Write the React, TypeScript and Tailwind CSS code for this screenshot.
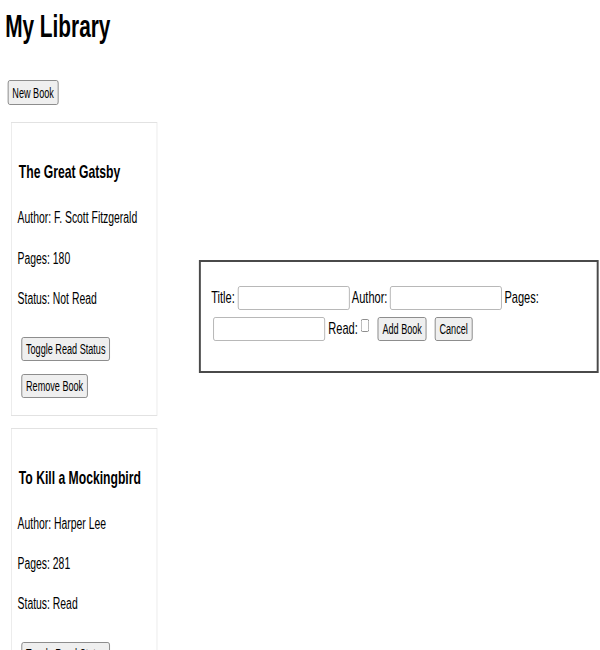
import React from "react";

const btn =
  "bg-[#efefef] border border-[#767676] rounded-[3px] px-[6px] text-[14px] leading-[16px] text-black";

function Card({
  title,
  author,
  pages,
  status,
}: {
  title: string;
  author: string;
  pages: number;
  status: string;
}) {
  return (
    <div className="border border-[#e2e2e2] w-[225px] pt-[38px] pb-[17px] px-[9px] flex flex-col items-start shrink-0">
      <h3 className="text-[18.72px] leading-[22px] font-bold ml-[2px]">{title}</h3>
      <p className="mt-[26px] leading-[18px]">Author: {author}</p>
      <p className="mt-[22.5px] leading-[18px]">Pages: {pages}</p>
      <p className="mt-[22px] leading-[18px]">Status: {status}</p>
      <button className={`${btn} mt-[29px] ml-[6px] h-[24px]`}>Toggle Read Status</button>
      <button className={`${btn} mt-[13px] ml-[6px] h-[24px]`}>Remove Book</button>
    </div>
  );
}

export default function App() {
  return (
    <div className="w-[600px] h-[650px] overflow-hidden bg-white">
      <div className="w-[923px] origin-top-left scale-x-[0.65] pt-[8px] px-[8px] font-['Liberation_Sans',Arial,sans-serif] text-[16px] text-black">
        <h1 className="text-[32px] leading-[37px] font-bold">My Library</h1>
        <button className={`${btn} mt-[35px] ml-[4px] h-[25px]`}>New Book</button>
        <div className="flex items-start mt-[17px]">
          <div className="flex flex-col gap-[12px] ml-[9px] shrink-0">
            <Card
              title="The Great Gatsby"
              author="F. Scott Fitzgerald"
              pages={180}
              status="Not Read"
            />
            <Card
              title="To Kill a Mockingbird"
              author="Harper Lee"
              pages={281}
              status="Read"
            />
          </div>
          <form className="shrink-0 ml-[64px] mt-[138px] w-[615px] border-y-2 border-x-[3px] border-[#4a4a4a] bg-white pt-[20px] pb-[27px] px-[16px] text-[17px] flex flex-col">
            <div className="flex items-center h-[31px]">
              <span>Title:</span>
              <input
                type="text"
                className="ml-[5px] w-[172px] h-[24px] border border-[#a9a9a9] rounded-[3px] bg-white"
              />
              <span className="ml-[3px]">Author:</span>
              <input
                type="text"
                className="ml-[4px] w-[172px] h-[24px] border border-[#a9a9a9] rounded-[3px] bg-white"
              />
              <span className="ml-[4px]">Pages:</span>
            </div>
            <div className="flex items-center h-[31px]">
              <input
                type="number"
                className="ml-[3px] w-[172px] h-[24px] border border-[#a9a9a9] rounded-[3px] bg-white"
              />
              <span className="ml-[5px]">Read:</span>
              <input type="checkbox" className="ml-[5px] w-[13px] h-[13px] -mt-[6px]" />
              <button type="button" className={`${btn} ml-[13px] h-[24px]`}>
                Add Book
              </button>
              <button type="button" className={`${btn} ml-[13px] h-[24px]`}>
                Cancel
              </button>
            </div>
          </form>
        </div>
      </div>
    </div>
  );
}
